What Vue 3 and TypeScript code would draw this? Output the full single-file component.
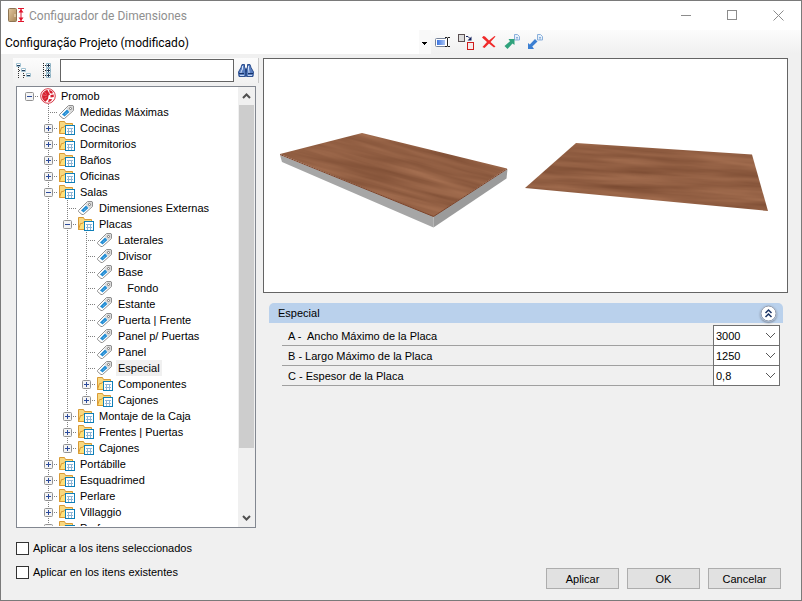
<script setup lang="ts">
import { computed, reactive, ref } from 'vue'

interface TreeNode {
  label: string
  kind?: 'root' | 'folder' | 'tag'
  open?: boolean
  selected?: boolean
  children?: TreeNode[]
}

interface Row {
  node: TreeNode
  depth: number
  last: boolean
  guides: boolean[]
}

const tag = (label: string, selected = false): TreeNode => ({ label, kind: 'tag', selected })
const folder = (label: string, children: TreeNode[] = [], open = false): TreeNode => ({
  label,
  kind: 'folder',
  children,
  open,
})

const tree = reactive<TreeNode>({
  label: 'Promob',
  kind: 'root',
  open: true,
  children: [
    tag('Medidas Máximas'),
    folder('Cocinas'),
    folder('Dormitorios'),
    folder('Baños'),
    folder('Oficinas'),
    folder(
      'Salas',
      [
        tag('Dimensiones Externas'),
        folder(
          'Placas',
          [
            tag('Laterales'),
            tag('Divisor'),
            tag('Base'),
            tag('   Fondo'),
            tag('Estante'),
            tag('Puerta | Frente'),
            tag('Panel p/ Puertas'),
            tag('Panel'),
            tag('Especial', true),
            folder('Componentes'),
            folder('Cajones'),
          ],
          true,
        ),
        folder('Montaje de la Caja'),
        folder('Frentes | Puertas'),
        folder('Cajones'),
      ],
      true,
    ),
    folder('Portábille'),
    folder('Esquadrimed'),
    folder('Perlare'),
    folder('Villaggio'),
    folder('Performa'),
  ],
})

function flatten(node: TreeNode, depth: number, last: boolean, guides: boolean[]): Row[] {
  const rows: Row[] = [{ node, depth, last, guides }]
  if (node.open && node.children) {
    const next = [...guides, depth > 0 && !last]
    node.children.forEach((child, i) => {
      const isLast = depth > 0 && i === node.children!.length - 1
      rows.push(...flatten(child, depth + 1, isLast, next))
    })
  }
  return rows
}

const rows = computed(() => flatten(tree, 0, true, []))

function toggle(node: TreeNode) {
  node.open = !node.open
}

const search = ref('')
const applySelected = ref(false)
const applyExisting = ref(false)
const panelOpen = ref(true)

const fields = reactive([
  { id: 'ancho', label: 'A -  Ancho Máximo de la Placa', value: '3000' },
  { id: 'largo', label: 'B - Largo Máximo de la Placa', value: '1250' },
  { id: 'espesor', label: 'C - Espesor de la Placa', value: '0,8' },
])
</script>

<template>
  <div class="window">
    <header class="titlebar">
      <svg class="app-icon" width="18" height="16" viewBox="0 0 18 16">
        <defs>
          <linearGradient id="door" x1="0" y1="0" x2="1" y2="1">
            <stop offset="0" stop-color="#e2c89f" />
            <stop offset="1" stop-color="#a98758" />
          </linearGradient>
        </defs>
        <rect x="1.500" y="0.5" width="8" height="13" rx="1" fill="url(#door)" stroke="#8d7452" />
        <path d="M8 6v3" stroke="#f3e3c4" />
        <path d="M11 .500h6M11 13.500h6M14 1v12" stroke="#e0152c" fill="none" />
        <path d="M14 1l2.500 3.500h-5zM14 13l2.500-3.500h-5z" fill="#e0152c" />
      </svg>
      <h1 class="title">Configurador de Dimensiones</h1>
      <div class="window-buttons">
        <button type="button" aria-label="Minimizar">
          <svg width="11" height="11" viewBox="0 0 11 11"><path d="M0 5.500h10" stroke="#8c8c8c" /></svg>
        </button>
        <button type="button" aria-label="Maximizar">
          <svg width="11" height="11" viewBox="0 0 11 11">
            <rect x="0.5" y="0.5" width="9" height="9" fill="none" stroke="#8c8c8c" />
          </svg>
        </button>
        <button type="button" aria-label="Cerrar">
          <svg width="11" height="11" viewBox="0 0 11 11">
            <path d="M0.500 0.500l10 10M10.500 0.500l-10 10" stroke="#8c8c8c" />
          </svg>
        </button>
      </div>
    </header>

    <div class="toolbar">
      <select class="config" aria-label="Configuración">
        <option>Configuração Projeto (modificado)</option>
      </select>
      <button type="button" class="tool" aria-label="Renombrar">
        <svg width="16" height="16" viewBox="0 0 16 16">
          <defs>
            <linearGradient id="field" x1="0" y1="0" x2="1" y2="0">
              <stop offset="0" stop-color="#3b74e0" />
              <stop offset="1" stop-color="#a9c5f6" />
            </linearGradient>
          </defs>
          <rect x="0.5" y="4.500" width="12" height="8" rx="1" fill="#fff" stroke="#76839a" />
          <rect x="2" y="6" width="8" height="5" fill="url(#field)" />
          <path d="M12.500 4v8" stroke="#fff" stroke-width="3" />
          <path d="M10 3.500h2l.5.5.5-.5h2M12.500 4v8M10 12.500h2l.5-.5.5.5h2" fill="none" stroke="#222" />
        </svg>
      </button>
      <button type="button" class="tool" aria-label="Copiar">
        <svg width="16" height="18" viewBox="0 0 16 18">
          <rect x="0.500" y="1.500" width="6" height="7" fill="#ddd" stroke="#5b5052" />
          <rect x="9.500" y="9.500" width="6" height="7" fill="#f6eaea" stroke="#d01c1c" />
          <path d="M8 3.500h2l2 2" fill="none" stroke="#14225e" />
          <path d="M13.500 3.500v4h-4z" fill="#14225e" />
        </svg>
      </button>
      <button type="button" class="tool" aria-label="Eliminar">
        <svg width="16" height="16" viewBox="0 0 16 16">
          <path d="M1 3.500L2.500 2 4 2.500 8 6.500 13.500 2l1 .5L9.500 8l5 4.500-1.500 1L8 9.500 3.500 14 1.500 13l4.500-5z" fill="#f02a2a" />
        </svg>
      </button>
      <button type="button" class="tool" aria-label="Exportar">
        <svg width="16" height="16" viewBox="0 0 16 16">
          <path d="M10.500.5h3l2 2v3.500h-5z" fill="#e6f0fb" stroke="#8ab0db" />
          <path d="M12 3.500h2M12 5h2" stroke="#8ab0db" />
          <path d="M10.500 5v6L8.500 9.500l-5 5.500L.5 12 6 7.300 4.500 5z" fill="#30a27c" />
        </svg>
      </button>
      <button type="button" class="tool" aria-label="Importar">
        <svg width="16" height="16" viewBox="0 0 16 16">
          <path d="M10.500.5h3l2 2v3.500h-5z" fill="#e6f0fb" stroke="#8ab0db" />
          <path d="M12 3.500h2M12 5h2" stroke="#8ab0db" />
          <path d="M1 15v-6L2.800 10.500l5.200-5.500 2.500 2.500-5.200 5L7 15z" fill="#3b7fd2" />
        </svg>
      </button>
    </div>

    <main class="body">
      <section class="left">
        <div class="search-bar">
          <button type="button" class="tool" aria-label="Expandir niveles">
            <svg width="16" height="16" viewBox="0 0 16 16">
              <path d="M2.500 4v12M3 7.500h3M7.500 10v6M8 12.500h3" fill="none" stroke="#333" stroke-dasharray="1 1" />
              <path d="M.500.500h4v3h-4zM5.500 5.500h4v3h-4zM10.500 10.500h4v3h-4z" fill="#fff" stroke="#9fc0d0" />
              <path d="M1 2.500h3M6 7.500h3M11 12.500h3" stroke="#263f5c" />
            </svg>
          </button>
          <button type="button" class="tool" aria-label="Contraer niveles">
            <svg width="16" height="16" viewBox="0 0 16 16">
              <path d="M5.500 0v16M7 2.500h2M7 7.500h2M7 12.500h2" fill="none" stroke="#222" stroke-dasharray="1 1" />
              <path d="M8.500.5h4v4h-4zM8.500 5.500h4v4h-4zM8.500 10.500h4v4h-4z" fill="#fff" stroke="#8fb3c5" />
              <path d="M9 2.500h3M10.500 1v3M9 7.500h3M10.500 6v3M9 12.500h3M10.500 11v3" stroke="#20364f" />
            </svg>
          </button>
          <input v-model="search" class="search" type="text" aria-label="Buscar" />
          <button type="button" class="tool find" aria-label="Buscar">
            <svg width="16" height="14" viewBox="0 0 16 14">
              <path d="M4 .500h2.500v2.500l1 2V12.500h-6.500L.500 8l2.500-4.500z" fill="#5a7fc0" stroke="#2f5190" />
              <path d="M12 .500H9.500v2.500l-1 2V12.500h6.500L15.500 8l-2.500-4.500z" fill="#5a7fc0" stroke="#2f5190" />
              <path d="M7 5h2v3H7z" fill="#234584" />
              <path d="M4.500 2v3L3 8v2M10.500 2v3L11 8v2" fill="none" stroke="#d3e2fa" />
              <path d="M1 9.500h5M10 9.500h5" stroke="#183468" />
              <path d="M2 11.500h4M10 11.500h4" stroke="#c3d5f3" />
            </svg>
          </button>
        </div>

        <div class="tree-box">
          <ul class="tree" role="tree">
            <li v-for="(row, i) in rows" :key="i" class="row" role="treeitem">
              <span v-for="(line, g) in row.guides" :key="g" class="cell" :class="{ through: line }"></span>
              <span class="cell joint" :class="{ up: row.depth > 0, down: row.depth > 0 && !row.last }">
                <button
                  v-if="row.node.kind !== 'tag'"
                  type="button"
                  class="toggle"
                  :aria-label="row.node.open ? 'Contraer' : 'Expandir'"
                  @click="toggle(row.node)"
                >
                  <svg width="9" height="9" viewBox="0 0 9 9">
                    <rect x="0.5" y="0.5" width="8" height="8" rx="1" fill="#f4f4f4" stroke="#929292" />
                    <path d="M2 4.500h5" stroke="#2b4a9b" />
                    <path v-if="!row.node.open" d="M4.500 2v5" stroke="#2b4a9b" />
                  </svg>
                </button>
              </span>

              <svg v-if="row.node.kind === 'root'" class="icon" width="18" height="16" viewBox="0 0 18 16">
                <circle cx="9" cy="8" r="7.300" fill="#fff" stroke="#d83a48" />
                <path d="M8.500 2C4.500 2.500 2.500 6 3.200 9.500c.4 2 1.500 3.500 3.300 4.200L9 11l.5-3.500 1.500-1L9.500 4z" fill="#d5202f" />
                <path d="M10 2l.8 3 2.500.8L13.800 4C13 3 11.500 2.200 10 2zM11.500 7l3.200-.5.1 2.500-3.300.5zM10 11l3.300.2C12.500 12.700 11 13.800 9 14z" fill="#d5202f" />
                <path d="M3.500 7l4 .500M5 11.500l2.500-2.500M5.500 4l2 2.500" stroke="#ef7f88" stroke-width="0.7" />
              </svg>
              <svg v-else-if="row.node.kind === 'folder'" class="icon" width="18" height="16" viewBox="0 0 18 16">
                <path d="M1.500 13.500V1.500h5l1 2h7v10z" fill="#f8d880" stroke="#d99a34" />
                <path d="M1.500 13.500L3.500 7.500h2l1-1.500h9l-1 7.500z" fill="#ffe07a" stroke="#d99a34" />
                <rect x="7.500" y="5.500" width="9" height="9" fill="#fff" stroke="#0f7fb8" />
                <path d="M9 8.500h6M9 11.500h6M10.500 8v6M13.500 8v6" stroke="#8fb6d6" />
              </svg>
              <svg v-else class="icon" width="18" height="16" viewBox="0 0 18 16">
                <path d="M1.500 10.500L10.500 1.500h4.500l.5.5v4.500L6.500 14.500H5L1.500 11.500z" fill="#fff" stroke="#8f8f8f" />
                <path d="M11 2h4v4.500L12.500 8.500 8.500 4.500z" fill="#d9d9d9" />
                <circle cx="12.500" cy="4.500" r="1" fill="#fff" stroke="#777" />
                <path d="M4 10.500l5-5 2.500 2.500-5 4.500z" fill="#1f8ad2" />
                <path d="M5.500 11.500l5-4.500" stroke="#8accf5" stroke-dasharray="1 1" />
              </svg>

              <span class="label" :class="{ selected: row.node.selected }">{{ row.node.label }}</span>
            </li>
          </ul>
          <div class="scrollbar">
            <button type="button" aria-label="Subir">
              <svg width="9" height="6" viewBox="0 0 9 6"><path d="M1 5l3.500-3.500L8 5" fill="none" stroke="#505050" stroke-width="2" /></svg>
            </button>
            <div class="track"><div class="thumb"></div></div>
            <button type="button" aria-label="Bajar">
              <svg width="9" height="6" viewBox="0 0 9 6"><path d="M1 1l3.500 3.500L8 1" fill="none" stroke="#505050" stroke-width="2" /></svg>
            </button>
          </div>
        </div>

        <div class="checks">
          <label><input v-model="applySelected" type="checkbox" />Aplicar a los itens seleccionados</label>
          <label><input v-model="applyExisting" type="checkbox" />Aplicar en los itens existentes</label>
        </div>
      </section>

      <section class="right">
        <div class="preview">
          <svg viewBox="264 59 523 233" role="img" aria-label="Placa">
            <defs>
              <filter id="grain" x="0" y="0" width="1" height="1" color-interpolation-filters="sRGB">
                <feTurbulence type="fractalNoise" baseFrequency="0.01 0.14" numOctaves="3" seed="4" />
                <feColorMatrix values="0.22 0 0 0 0.46  0.19 0 0 0 0.275  0.16 0 0 0 0.18  0 0 0 0 1" />
              </filter>
              <clipPath id="slab"><path d="M280 154L362 133 507 168.500 433.500 216.500z" /></clipPath>
              <clipPath id="sheet"><path d="M576 143L752 154.500 768 211 525 188z" /></clipPath>
            </defs>
            <path d="M280 155L433.500 216 433.500 227.500 282 162z" fill="#a6a6a6" />
            <path d="M433.500 216L507.500 169 506.500 178.500 433.500 227.500z" fill="#9b9b9b" />
            <g clip-path="url(#slab)">
              <rect x="220" y="60" width="340" height="230" transform="rotate(15 394 175)" filter="url(#grain)" />
            </g>
            <path d="M280 154.500L433.500 216.500 507 169" fill="none" stroke="#7d4227" />
            <g clip-path="url(#sheet)">
              <rect x="515" y="110" width="265" height="130" transform="rotate(4 646 177)" filter="url(#grain)" />
            </g>
          </svg>
        </div>

        <div class="group">
          <div class="group-head">
            <h2>Especial</h2>
            <button type="button" class="collapse" aria-label="Contraer grupo" @click="panelOpen = !panelOpen">
              <svg width="17" height="17" viewBox="0 0 17 17">
                <circle cx="8.500" cy="8.500" r="7.500" fill="#fff" stroke="#8e97a8" />
                <path d="M5.500 8l3-3 3 3M5.500 12l3-3 3 3" fill="none" stroke="#1c3566" stroke-width="1.500" />
              </svg>
            </button>
          </div>
          <div v-if="panelOpen" class="fields">
            <div v-for="f in fields" :key="f.id" class="field">
              <label :for="f.id">{{ f.label }}</label>
              <select :id="f.id" v-model="f.value">
                <option>{{ f.value }}</option>
              </select>
            </div>
          </div>
        </div>

        <footer class="actions">
          <button type="button">Aplicar</button>
          <button type="button">OK</button>
          <button type="button">Cancelar</button>
        </footer>
      </section>
    </main>
  </div>
</template>

<style>
body {
  margin: 0;
}
</style>

<style scoped>
.window {
  box-sizing: border-box;
  display: flex;
  flex-direction: column;
  height: 100vh;
  border: 1px solid #7a7a7a;
  background: #f0f0f0;
  color: #000;
  font: 11px/16px 'Liberation Sans', Arial, sans-serif;
}

button {
  padding: 0;
  border: 0;
  background: none;
  color: inherit;
  font: inherit;
}

svg {
  display: block;
}

.titlebar {
  display: flex;
  align-items: center;
  height: 29px;
  padding-left: 6px;
  background: #fff;
}

.title {
  margin: 0 auto 0 4px;
  color: #8f8f8f;
  font: 12px/16px Roboto, 'Open Sans', sans-serif;
}

.window-buttons {
  display: flex;
}

.window-buttons button {
  display: grid;
  place-items: center;
  width: 46px;
  height: 28px;
}

.toolbar {
  display: flex;
  align-items: center;
  gap: 7px;
  height: 24px;
  background: linear-gradient(#fcfcfc, #f0f0f0);
}

.config {
  width: 430px;
  height: 24px;
  margin-right: -3px;
  padding: 1px 4px 0;
  border: 0;
  appearance: none;
  background:
    linear-gradient(#000, #000) right 4px top 12px / 5px 1px no-repeat,
    linear-gradient(#000, #000) right 5px top 13px / 3px 1px no-repeat,
    linear-gradient(#000, #000) right 6px top 14px / 1px 1px no-repeat,
    linear-gradient(#f9f9f9, #f9f9f9) right / 12px 100% no-repeat,
    #fff;
  color: #000;
  font: 12px/16px Roboto, 'Open Sans', sans-serif;
}

.tool {
  display: grid;
  place-items: center;
  width: 16px;
  height: 22px;
}

.body {
  display: flex;
  flex: 1;
  min-height: 0;
  gap: 4px;
  padding: 4px 13px 0 12px;
}

.left {
  display: flex;
  flex-direction: column;
  width: 246px;
}

.search-bar {
  display: flex;
  align-items: center;
  gap: 6px;
  height: 25px;
  padding: 0 4px 0 3px;
  border-right: 1px solid #c8c8c8;
  background: linear-gradient(#fcfcfc, #f1f1f1);
}

.search {
  box-sizing: border-box;
  flex: 1;
  min-width: 0;
  height: 23px;
  border: 1px solid #646464;
  background: #fff;
  font: inherit;
}

.search-bar .find {
  margin-left: -2px;
}

.tree-box {
  display: flex;
  flex: 1;
  min-height: 0;
  margin: 3px 3px 0;
  border: 1px solid #828790;
  background: #fff;
}

.tree {
  flex: 1;
  min-width: 0;
  margin: 1px 0;
  padding: 0 0 0 3px;
  overflow: hidden;
  list-style: none;
}

.row {
  display: flex;
  align-items: center;
  height: 16px;
}

.cell {
  display: grid;
  flex: none;
  place-items: center;
  width: 19px;
  height: 16px;
  --dots-v: repeating-linear-gradient(#808080 0 1px, transparent 1px 2px);
  --dots-h: repeating-linear-gradient(90deg, #808080 0 1px, transparent 1px 2px);
}

.through {
  background: var(--dots-v) 9px 0 / 1px 16px no-repeat;
}

.joint {
  background: var(--dots-h) 9px 8px / 10px 1px no-repeat;
}

.joint.up {
  background:
    var(--dots-h) 9px 8px / 10px 1px no-repeat,
    var(--dots-v) 9px 0 / 1px 8px no-repeat;
}

.joint.down {
  background:
    var(--dots-h) 9px 8px / 10px 1px no-repeat,
    var(--dots-v) 9px 0 / 1px 16px no-repeat;
}

.icon {
  flex: none;
}

.label {
  margin-left: 2px;
  padding: 0 2px;
  white-space: pre;
}

.selected {
  background: #f0f0f0;
}

.scrollbar {
  display: flex;
  flex-direction: column;
  width: 17px;
  background: #f0f0f0;
}

.scrollbar button {
  display: grid;
  place-items: center;
  height: 18px;
}

.track {
  flex: 1;
}

.thumb {
  height: 85%;
  margin: 0 1px;
  background: #cdcdcd;
}

.checks {
  display: flex;
  flex-direction: column;
  gap: 8px;
  padding: 12px 3px 20px;
}

.checks label {
  display: flex;
  align-items: center;
  gap: 4px;
}

.checks input {
  box-sizing: border-box;
  width: 13px;
  height: 13px;
  margin: 0;
  border: 1px solid #333;
  appearance: none;
  background: #fff;
}

.checks input:checked {
  box-shadow: inset 0 0 0 2px #fff;
  background: #333;
}

.right {
  display: flex;
  flex: 1;
  flex-direction: column;
  min-width: 0;
}

.preview {
  border: 1px solid #646464;
  background: #fff;
}

.preview svg {
  width: 100%;
}

.group {
  margin: 10px 5px 0 6px;
}

.group-head {
  display: flex;
  align-items: center;
  justify-content: space-between;
  height: 20px;
  padding: 0 6px 0 9px;
  border-radius: 5px 5px 0 0;
  background: #bad1ec;
}

h2 {
  margin: 0;
  font: inherit;
}

.collapse {
  border-radius: 50%;
  box-shadow: 0 1px 2px #7d8899;
}

.fields {
  display: flex;
  flex-direction: column;
  padding: 2px 3px 0 13px;
}

.field {
  display: flex;
  align-items: flex-start;
  height: 20px;
}

.field label {
  box-sizing: border-box;
  flex: 1;
  height: 21px;
  padding: 3px 6px 0;
  border-bottom: 1px solid #a0a0a0;
  white-space: pre;
}

.field select {
  box-sizing: border-box;
  width: 67px;
  height: 21px;
  padding: 0 2px;
  border: 1px solid #707070;
  border-radius: 0;
  appearance: none;
  background:
    linear-gradient(45deg, transparent 42%, #555 42% 58%, transparent 58%) right 8px center / 5px 5px no-repeat,
    linear-gradient(-45deg, transparent 42%, #555 42% 58%, transparent 58%) right 4px center / 5px 5px no-repeat,
    #fff;
  color: #000;
  font: inherit;
}

.actions {
  display: flex;
  justify-content: flex-end;
  gap: 8px;
  margin-top: auto;
  padding: 0 7px 11px 0;
}

.actions button {
  box-sizing: border-box;
  width: 73px;
  height: 21px;
  border: 1px solid #adadad;
  background: #e1e1e1;
}
</style>
